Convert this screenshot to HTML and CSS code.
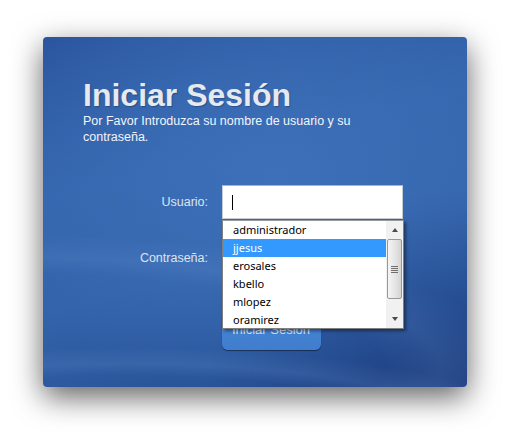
FILE: index.html
```html
<!DOCTYPE html>
<html lang="es">
<head>
<meta charset="UTF-8">
<meta name="viewport" content="width=device-width, initial-scale=1.0">
<title>Iniciar Sesión</title>
<link rel="stylesheet" href="styles.css">
</head>
<body>
    <div class="page">
        <div class="card">
            <h1 class="title">Iniciar Sesión</h1>
            <p class="subtitle">Por Favor Introduzca su nombre de usuario y su contraseña.</p>

            <div class="form">
                <label class="label">Usuario:</label>
                <div class="field"><span class="caret"></span></div>

                <label class="label">Contraseña:</label>
                <div class="field"></div>

                <button class="btn">Iniciar Sesión</button>

                <!-- lista de autocompletar del navegador -->
                <div class="suggest">
                    <ul class="suggest-list">
                        <li>administrador</li>
                        <li class="active">jjesus</li>
                        <li>erosales</li>
                        <li>kbello</li>
                        <li>mlopez</li>
                        <li>oramirez</li>
                    </ul>
                    <div class="scrollbar">
                        <div class="arrow up"></div>
                        <div class="track">
                            <div class="thumb"><span></span><span></span><span></span><span></span></div>
                        </div>
                        <div class="arrow down"></div>
                    </div>
                </div>
            </div>
        </div>
    </div>
</body>
</html>
```

FILE: styles.css
```css
html, body{
    margin: 0;
    background: #fff;
    font-family: "Liberation Sans", Arial, sans-serif;
}
.page{
    padding: 37px 0 45px 43px;
}
.card{
    width: 424px;
    height: 350px;
    box-sizing: border-box;
    padding: 42px 0 0 40px;
    border-radius: 4px;
    box-shadow: 0 10px 30px rgba(0, 0, 0, 0.62);
    background:
        radial-gradient(ellipse 520px 120px at 20% 118%, rgba(255,255,255,0) 62%, rgba(120,160,220,0.16) 72%, rgba(255,255,255,0) 86%),
        radial-gradient(ellipse 600px 160px at -5% 95%, rgba(255,255,255,0) 60%, rgba(120,160,220,0.14) 70%, rgba(255,255,255,0) 84%),
        radial-gradient(ellipse 260px 200px at 100% 100%, rgba(20,48,110,0.5), rgba(20,48,110,0) 100%),
        radial-gradient(ellipse 300px 220px at 55% 40%, #3d70b9, rgba(61,112,185,0) 100%),
        linear-gradient(165deg, #2a559e 0%, #3466ae 35%, #3363aa 60%, #2a569c 80%, #24498c 100%);
    overflow: hidden;
}
.title{
    margin: 0;
    font-size: 32px;
    line-height: 32px;
    font-weight: bold;
    color: #e6e9ef;
    text-shadow: 1px 1px 1px rgba(0, 0, 0, 0.25);
}
.subtitle{
    margin: 2px 0 0;
    width: 290px;
    font-size: 12.5px;
    line-height: 16px;
    color: #f2f5fa;
}
.form{
    position: relative;
    margin-top: 40px;
    display: grid;
    grid-template-columns: 125px 181px;
    column-gap: 14px;
    row-gap: 22px;
}
.label{
    align-self: center;
    text-align: right;
    font-size: 12.5px;
    color: #dce4f0;
}
.field{
    height: 34px;
    box-sizing: border-box;
    background: #fff;
    border: 1px solid #c4ccd8;
    border-top-color: #a9b3c2;
    padding: 0 9px;
    display: flex;
    align-items: center;
}
.caret{
    width: 1px;
    height: 15px;
    background: #000;
}
.btn{
    grid-column: 2;
    margin-top: 13px;
    width: 99px;
    height: 40px;
    padding: 0 0 0 10px;
    border: 0;
    border-radius: 6px;
    text-align: left;
    font-family: "Liberation Sans", Arial, sans-serif;
    font-size: 13px;
    line-height: 40px;
    color: #dbe4f1;
    background: linear-gradient(#4786d6, #407ecd);
    box-shadow: 0 1px 1px rgba(0, 0, 0, 0.45);
}

/* autocompletar */
.suggest{
    position: absolute;
    top: 35px;
    left: 139px;
    width: 182px;
    height: 109px;
    box-sizing: border-box;
    border: 1px solid #7f7f7f;
    border-top-color: #9a9a9a;
    background: #fff;
    display: flex;
    box-shadow: 2px 2px 3px rgba(0, 0, 0, 0.45);
}
.suggest-list{
    flex: 1;
    margin: 0;
    padding: 0;
    list-style: none;
    font-family: "Noto Sans", sans-serif;
    font-size: 11px;
    color: #000;
}
.suggest-list li{
    height: 18px;
    line-height: 18px;
    padding-left: 10px;
}
.suggest-list li.active{
    background: #3399ff;
    color: #fff;
}
.scrollbar{
    width: 17px;
    display: flex;
    flex-direction: column;
    background: #f1f1f1;
}
.arrow{
    height: 18px;
    display: flex;
    align-items: center;
    justify-content: center;
}
.arrow::before{
    content: "";
    border-left: 3.5px solid transparent;
    border-right: 3.5px solid transparent;
}
.arrow.up::before{
    border-bottom: 4px solid #4a4a4a;
}
.arrow.down::before{
    border-top: 4px solid #4a4a4a;
}
.track{
    flex: 1;
    padding: 0 1px;
}
.thumb{
    height: 60px;
    box-sizing: border-box;
    border: 1px solid #989898;
    border-radius: 2px;
    background: linear-gradient(90deg, #f5f5f5, #e6e6e6 50%, #d4d4d4);
    display: flex;
    flex-direction: column;
    justify-content: center;
    align-items: center;
    gap: 1px;
}
.thumb span{
    width: 7px;
    height: 1px;
    background: #6f6f6f;
}
```
